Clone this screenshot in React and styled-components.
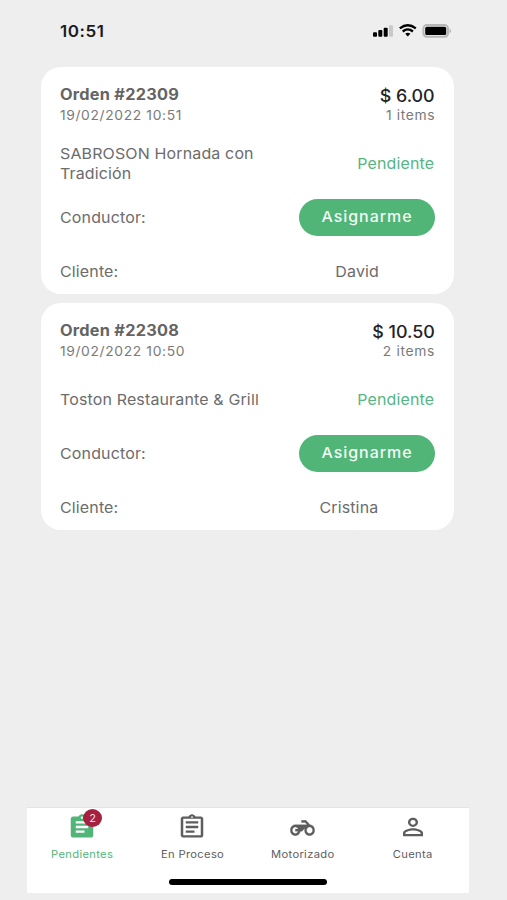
import React from "react";
import styled, { createGlobalStyle } from "styled-components";
import { MdAssignment, MdOutlineAssignment, MdPersonOutline } from "react-icons/md";

const GlobalStyle = createGlobalStyle`
  * { box-sizing: border-box; }
  body { margin: 0; background: #eeeeee; font-family: Inter, "Liberation Sans", sans-serif; }
`;

const Screen = styled.div`
  height: 900px;
  display: flex;
  flex-direction: column;
  background: #eeeeee;
  overflow: hidden;
`;

const StatusBar = styled.header`
  height: 67px;
  padding: 21px 56px 0 60px;
  display: flex;
  justify-content: space-between;
  align-items: flex-start;
`;

/* Text set slightly wide, anchored to the edge it aligns with. */
const WideText = styled.span`
  display: block;
  transform: scaleX(1.065);
  transform-origin: ${(p) => p.$origin || "left"} center;
`;

const Clock = styled(WideText)`
  font-size: 16px;
  font-weight: 600;
  line-height: 20px;
  letter-spacing: 0.5px;
  color: #1b1b1b;
`;

const StatusIcons = styled.svg`
  width: 79px;
  height: 14px;
  margin-top: 3px;
`;

const Orders = styled.main`
  flex: 1;
  padding: 0 53px 0 41px;
  display: flex;
  flex-direction: column;
  gap: 9px;
`;

const Card = styled.article`
  height: 227px;
  padding: 17px 19.5px 0 19px;
  border-radius: 20px;
  background: #ffffff;
`;

const Row = styled.div`
  height: ${(p) => p.$height || 54}px;
  display: flex;
  justify-content: space-between;
  align-items: ${(p) => p.$align || "center"};
  padding-right: ${(p) => p.$inset || 0}px;
`;

const Stack = styled.div`
  display: flex;
  flex-direction: column;
  align-items: ${(p) => (p.$end ? "flex-end" : "flex-start")};
`;

const OrderTitle = styled(WideText)`
  font-size: 15.3px;
  font-weight: 700;
  line-height: 21px;
  letter-spacing: 0.25px;
  color: #646464;
`;

const Meta = styled(WideText)`
  font-size: 13px;
  line-height: 20px;
  letter-spacing: 0.6px;
  margin-right: -0.5px;
  color: #7a7a7a;
`;

const Price = styled(WideText)`
  font-size: 16.8px;
  font-weight: 500;
  line-height: 25px;
  margin-bottom: -4px;
  color: #242424;
`;

const Label = styled(WideText)`
  max-width: 195px;
  font-size: 15px;
  line-height: 20px;
  letter-spacing: 0.14px;
  color: ${(p) => (p.$accent ? "#55b583" : "#6c6c6c")};
`;

const AssignButton = styled.button`
  width: 136px;
  height: 37px;
  margin: 0 -0.5px 1px 0;
  padding: 0;
  border: 0;
  border-radius: 19px;
  background: #50b576;
  color: #f2fcf5;
  font: 500 15px/20px Inter, "Liberation Sans", sans-serif;
  letter-spacing: 0.9px;
`;

const TabBar = styled.nav`
  width: 442px;
  height: 86px;
  margin: 0 0 7px 27px;
  border-top: 1px solid #e4e4e4;
  background: #ffffff;
  display: flex;
  flex-direction: column;
  align-items: center;
`;

const Tabs = styled.div`
  width: 100%;
  height: 71px;
  padding-right: 1px;
  display: grid;
  grid-template-columns: repeat(4, 1fr);
`;

const Tab = styled.a`
  display: flex;
  flex-direction: column;
  align-items: center;
  padding-top: 5px;
  color: ${(p) => (p.$active ? "#52b578" : "#5d5d5d")};
`;

const IconBox = styled.span`
  position: relative;
  height: 28px;
  display: flex;
  align-items: center;

  svg { display: block; width: 30px; height: 28px; }
`;

const MotorcycleSvg = styled.svg`
  && { width: 25px; height: 16px; margin-top: 2px; }
`;

const TabLabel = styled(WideText)`
  margin-top: 6px;
  font-size: 10.5px;
  line-height: 16px;
  letter-spacing: 0.3px;
`;

const Badge = styled.span`
  position: absolute;
  top: -4px;
  left: 16px;
  width: 19px;
  height: 18px;
  border-radius: 50%;
  background: #a5203f;
  color: #f8dfe5;
  font-size: 11px;
  line-height: 18px;
  text-align: center;
`;

const HomeIndicator = styled.div`
  width: 158px;
  height: 6px;
  border-radius: 3px;
  background: #000000;
`;

function Motorcycle() {
  return (
    <MotorcycleSvg
      viewBox="-0.3 4.7 24.6 14.6"
      preserveAspectRatio="none"
      fill="currentColor"
      stroke="currentColor"
      strokeWidth="0.3"
    >
      <path d="M19.44 9.03L15.41 5H11v2h3.59l2 2H5c-2.8 0-5 2.2-5 5s2.2 5 5 5c2.46 0 4.45-1.69 4.9-4h1.65l2.77-2.77c-.21.54-.32 1.14-.32 1.77 0 2.8 2.2 5 5 5s5-2.2 5-5c0-2.65-1.97-4.77-4.56-4.97zM7.82 15C7.4 16.15 6.28 17 5 17c-1.63 0-3-1.37-3-3s1.37-3 3-3c1.28 0 2.4.85 2.82 2H5v2h2.82zM19 17c-1.66 0-3-1.34-3-3s1.34-3 3-3 3 1.34 3 3-1.34 3-3 3z" />
    </MotorcycleSvg>
  );
}

function DeviceStatus() {
  return (
    <StatusIcons viewBox="0 0 79 14">
      <rect x="1" y="8.3" width="4" height="4.4" rx="1" />
      <rect x="6.3" y="6" width="4" height="6.7" rx="1" />
      <rect x="11.7" y="3.7" width="4" height="9" rx="1" />
      <rect x="17" y="1.3" width="4" height="11.4" rx="1" fill="#c9c9c9" />
      <g fill="none" stroke="#000" strokeWidth="2.3">
        <path d="M27.8 4.4Q35.8 -2 43.8 4.4" />
        <path d="M30.7 7.5Q35.8 3.3 40.9 7.5" />
      </g>
      <path d="M33.2 9.7Q35.8 7.6 38.4 9.7L35.8 12.4Z" />
      <rect x="51.4" y="1.1" width="24.6" height="11.6" rx="3.4" fill="#eee" stroke="#b7b7b7" strokeWidth="2" />
      <rect x="53.2" y="2.8" width="21" height="8.2" rx="1.6" />
      <path d="M77.6 4.6Q79 5.2 79 6.9T77.6 9.2Z" fill="#b0b0b0" />
    </StatusIcons>
  );
}

const orders = [
  { id: "22309", date: "19/02/2022 10:51", price: "$ 6.00", items: 1, store: "SABROSON Hornada con Tradición", client: "David" },
  { id: "22308", date: "19/02/2022 10:50", price: "$ 10.50", items: 2, store: "Toston Restaurante & Grill", client: "Cristina" },
];

const tabs = [
  { label: "Pendientes", Icon: MdAssignment, badge: 2 },
  { label: "En Proceso", Icon: MdOutlineAssignment },
  { label: "Motorizado", Icon: Motorcycle },
  { label: "Cuenta", Icon: MdPersonOutline },
];

function OrderCard({ order }) {
  return (
    <Card>
      <Row $height={52} $align="flex-start">
        <Stack>
          <OrderTitle>Orden #{order.id}</OrderTitle>
          <Meta>{order.date}</Meta>
        </Stack>
        <Stack $end>
          <Price $origin="right">{order.price}</Price>
          <Meta $origin="right">{order.items} items</Meta>
        </Stack>
      </Row>
      <Row $height={55}>
        <Label>{order.store}</Label>
        <Label $accent $origin="right">Pendiente</Label>
      </Row>
      <Row $height={53}>
        <Label>Conductor:</Label>
        <AssignButton>
          <WideText $origin="center">Asignarme</WideText>
        </AssignButton>
      </Row>
      <Row $height={56} $inset={56}>
        <Label>Cliente:</Label>
        <Label $origin="right">{order.client}</Label>
      </Row>
    </Card>
  );
}

export default function App() {
  return (
    <Screen>
      <GlobalStyle />
      <StatusBar>
        <Clock>10:51</Clock>
        <DeviceStatus />
      </StatusBar>
      <Orders>
        {orders.map((order) => (
          <OrderCard key={order.id} order={order} />
        ))}
      </Orders>
      <TabBar>
        <Tabs>
          {tabs.map(({ label, Icon, badge }) => (
            <Tab key={label} $active={Boolean(badge)}>
              <IconBox>
                <Icon preserveAspectRatio="none" />
                {badge && <Badge>{badge}</Badge>}
              </IconBox>
              <TabLabel $origin="center">{label}</TabLabel>
            </Tab>
          ))}
        </Tabs>
        <HomeIndicator />
      </TabBar>
    </Screen>
  );
}
